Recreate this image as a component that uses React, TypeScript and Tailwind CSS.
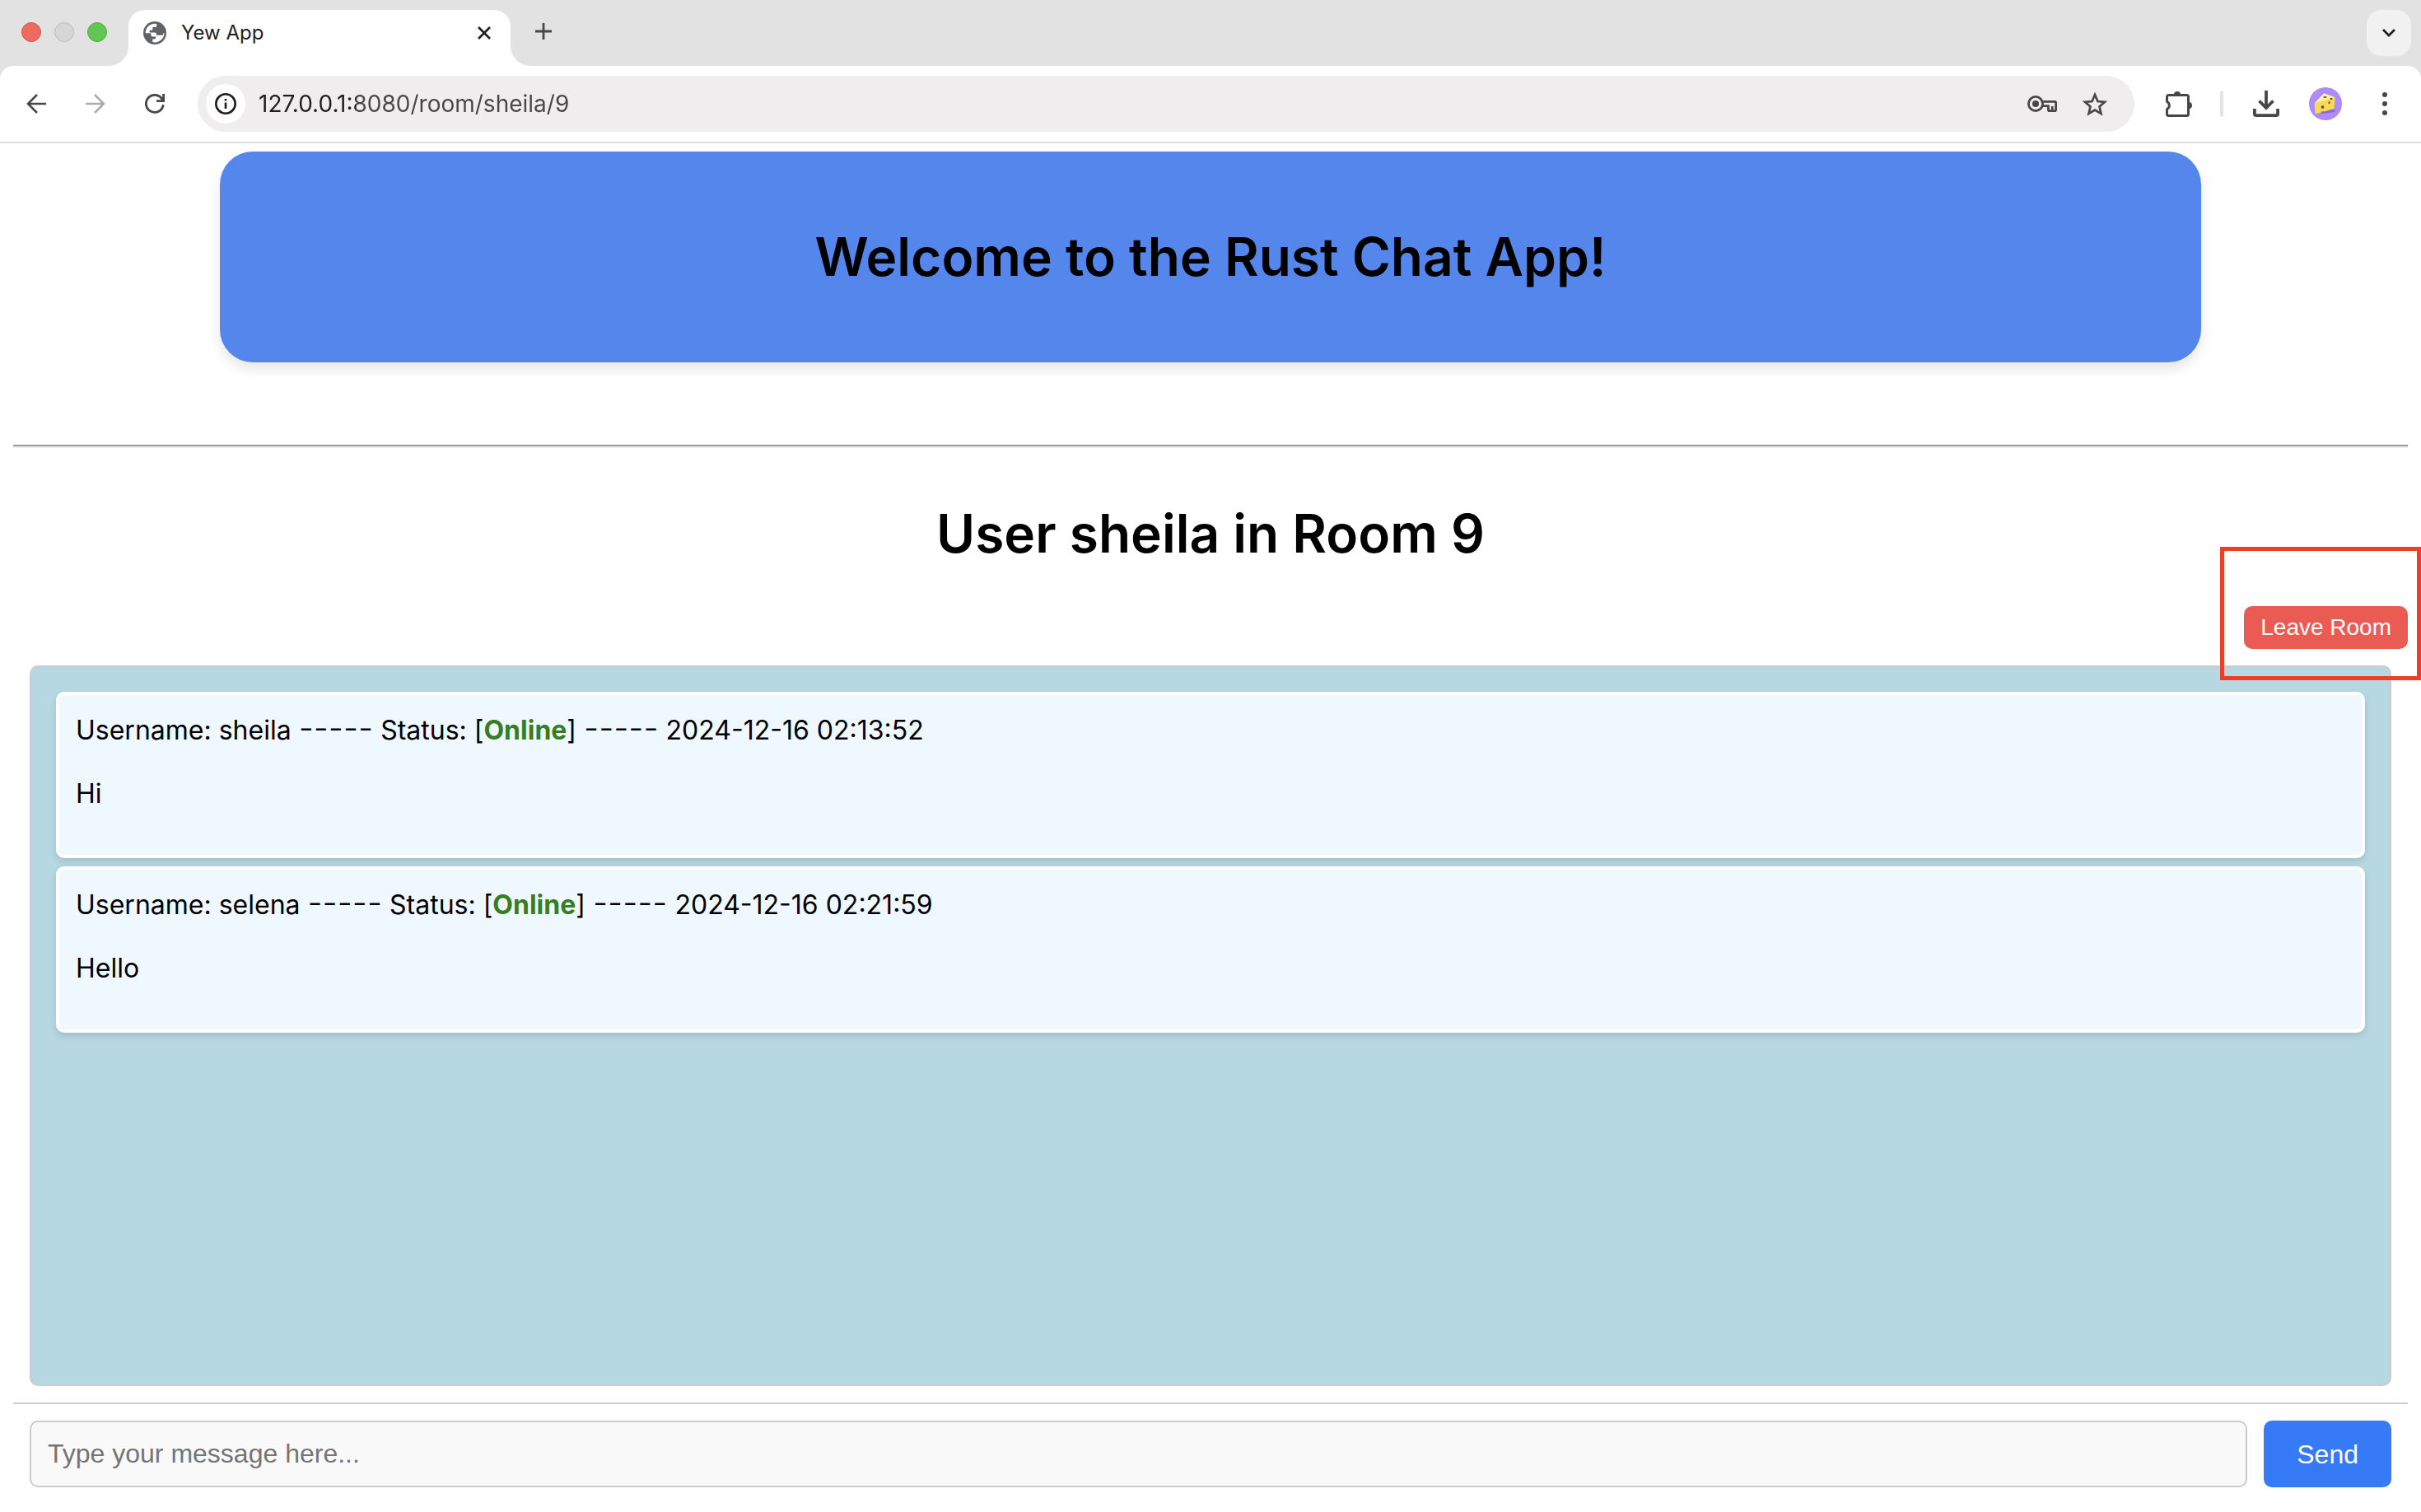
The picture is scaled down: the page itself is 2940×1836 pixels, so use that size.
import { useState } from "react";
import type { ReactNode } from "react";

type Message = { id: number; username: string; online: boolean; sentAt: string; text: string };

const messages: Message[] = [
  { id: 1, username: "sheila", online: true, sentAt: "2024-12-16 02:13:52", text: "Hi" },
  { id: 2, username: "selena", online: true, sentAt: "2024-12-16 02:21:59", text: "Hello" },
];

function IconButton({ label, className = "", children }: { label: string; className?: string; children: ReactNode }) {
  return (
    <button
      type="button"
      aria-label={label}
      className={`flex size-10 shrink-0 items-center justify-center rounded-full text-[#474747] ${className}`}
    >
      {children}
    </button>
  );
}

function Globe() {
  return (
    <svg viewBox="0 0 28 28" className="size-7 shrink-0" aria-hidden="true">
      <circle cx="14" cy="14" r="14" fill="#5f6368" />
      <path
        fill="#fff"
        d="M16.2 2.9v2.6c0 .9-.6 1.5-1.5 1.5h-3.3v2.4c0 .8-.6 1.4-1.4 1.4H7.600v2.6H14c1.100 0 1.900.8 1.900 1.900v1.500h6.200c.7 0 1.300.3 1.700-.3 .5-.8.6-1.600.8-2.400h.9A11.300 11.300 0 0 1 11.200 25v-3.500h2.300c1 0 1.700-.7 1.700-1.700v-1.400h-3.900c-1.100 0-1.900-.8-1.900-1.900v-2.300H2.700A11.300 11.300 0 0 1 16.200 2.900z"
      />
    </svg>
  );
}

function Avatar() {
  return (
    <svg viewBox="0 0 40 40" className="size-10" aria-hidden="true">
      <circle cx="20" cy="20" r="20" fill="#ad8bf8" />
      <path d="M12 31l9-3 11-1-1 3-14 2z" fill="#8a68d8" />
      <path d="M6.500 19.500L18 7.200l13.500 4.800-.3 1z" fill="#fdf1a4" />
      <path d="M6.500 19.500l25-7.500-.8 13.500-12.700 4.300c-1.300-2-3-1.500-3.500 1L7.500 32z" fill="#f7da55" />
      <ellipse cx="19.500" cy="12" rx="2.200" ry="1" fill="#7a4a48" />
      <ellipse cx="27" cy="14" rx="1.500" ry="1.200" fill="#7a4a48" />
      <ellipse cx="24.500" cy="18.700" rx="1.200" ry="1.400" fill="#7a4a48" />
      <ellipse cx="16.500" cy="24" rx="1.800" ry="2" fill="#7a4a48" />
    </svg>
  );
}

function TabStrip() {
  return (
    <div className="flex h-20 items-end pr-3 pl-[26px]">
      <div className="mr-0.5 flex h-20 items-center gap-4 pb-0.5">
        <button type="button" aria-label="Close window" className="size-6 rounded-full border border-[#d8574b] bg-[#ed6a5e]" />
        <button type="button" aria-label="Minimize window" className="size-6 rounded-full border border-[#bcbcbc] bg-[#d5d5d5]" />
        <button type="button" aria-label="Zoom window" className="size-6 rounded-full border border-[#52a93f] bg-[#61c654]" />
      </div>
      <svg viewBox="0 0 24 24" className="size-6 shrink-0" aria-hidden="true">
        <path d="M24 0v24H0A24 24 0 0 0 24 0z" fill="#fff" />
      </svg>
      <div className="flex h-[68px] w-[464px] items-center rounded-t-[20px] bg-white pr-3 pb-3 pl-[18px]">
        <Globe />
        <span className="ml-[18px] flex-1 text-[24px] leading-8 text-[#1f1f1f]">Yew App</span>
        <IconButton label="Close tab">
          <svg viewBox="0 0 16 16" className="size-4" fill="none" stroke="#1f1f1f" strokeWidth="2.600" aria-hidden="true">
            <path d="M1 1l14 14M15 1L1 15" />
          </svg>
        </IconButton>
      </div>
      <svg viewBox="0 0 24 24" className="size-6 shrink-0" aria-hidden="true">
        <path d="M0 0v24h24A24 24 0 0 1 0 0z" fill="#fff" />
      </svg>
      <IconButton label="New tab" className="mr-auto mb-[22px] -ml-1">
        <svg viewBox="0 0 20 20" className="size-5" fill="none" stroke="currentColor" strokeWidth="2.800" aria-hidden="true">
          <path d="M10 0v20M0 10h20" />
        </svg>
      </IconButton>
      <button
        type="button"
        aria-label="Search tabs"
        className="mb-3 flex h-14 w-[54px] items-center justify-center rounded-[18px] bg-[#f1f1f1]"
      >
        <svg viewBox="0 0 16 10" className="h-2.5 w-4" fill="none" stroke="#1f1f1f" strokeWidth="2.800" aria-hidden="true">
          <path d="M1 1l7 7 7-7" />
        </svg>
      </button>
    </div>
  );
}

function Toolbar() {
  const [url, setUrl] = useState("127.0.0.1:8080/room/sheila/9");
  return (
    <div className="flex h-[94px] items-center rounded-t-[16px] border-b-2 border-[#e2e2e2] bg-white px-6">
      <div className="mr-8 flex gap-8">
        <IconButton label="Back">
          <svg viewBox="0 0 24 24" className="size-6" fill="none" stroke="currentColor" strokeWidth="2.600" aria-hidden="true">
            <path d="M24 12H2M13 1L2 12l11 11" />
          </svg>
        </IconButton>
        <IconButton label="Forward" className="text-[#ababab]">
          <svg viewBox="0 0 24 24" className="size-6" fill="none" stroke="#ababab" strokeWidth="2.600" aria-hidden="true">
            <path d="M0 12h22M11 1l11 11-11 11" />
          </svg>
        </IconButton>
        <IconButton label="Reload">
          <svg viewBox="0 0 24 24" className="size-6" fill="none" stroke="currentColor" strokeWidth="2.800" aria-hidden="true">
            <path d="M22.300 13.200A10.500 10.500 0 1 1 20.200 5.400L22 8M22.600 0v8.600H14" />
          </svg>
        </IconButton>
      </div>

      <div className="flex h-[68px] flex-1 items-center rounded-full bg-[#efedee] pr-7 pl-2.5">
        <button type="button" aria-label="View site information" className="flex size-12 items-center justify-center rounded-full bg-white">
          <svg viewBox="0 0 26 26" className="size-[26px]" fill="none" stroke="#1f1f1f" strokeWidth="2.600" aria-hidden="true">
            <circle cx="13" cy="13" r="11.700" />
            <path d="M13 11.500V19M13 7v2.600" />
          </svg>
        </button>
        <input
          type="text"
          aria-label="Address and search bar"
          value={url}
          onChange={(e) => setUrl(e.target.value)}
          className="ml-4 h-12 flex-1 bg-[linear-gradient(90deg,#1f1f1f_118px,#474747_118px)] bg-clip-text text-[28px] text-transparent caret-black outline-none"
        />
        <div className="flex gap-6">
          <IconButton label="Manage passwords">
            <svg viewBox="0 0 36 20" className="h-5 w-9" fill="none" stroke="currentColor" strokeWidth="2.800" aria-hidden="true">
              <circle cx="10" cy="10" r="8.600" />
              <circle cx="10" cy="10" r="4" fill="currentColor" stroke="none" />
              <path d="M18 7.400h15.200a1.400 1.400 0 0 1 1.400 1.400v8.400a1.400 1.400 0 0 1-1.400 1.400h-6.400a1.400 1.400 0 0 1-1.400-1.400v-4.600H18M30.200 18.500V13" />
            </svg>
          </IconButton>
          <IconButton label="Bookmark this tab">
            <svg viewBox="0 0 32 30" className="h-[30px] w-8" fill="none" stroke="currentColor" strokeWidth="2.700" aria-hidden="true">
              <path d="M16 4l3.400 8 8.600.8-6.500 5.700 2 8.500-7.500-4.500L8.500 27l2-8.500L4 12.800l8.600-.8z" />
            </svg>
          </IconButton>
        </div>
      </div>

      <IconButton label="Extensions" className="ml-[34px]">
        <svg viewBox="0 0 32 32" className="size-8" aria-hidden="true">
          <path
            fill="none"
            stroke="currentColor"
            strokeWidth="3"
            strokeLinejoin="round"
            d="M1.500 7.500a2 2 0 0 1 2-2h22a2 2 0 0 1 2 2v21a2 2 0 0 1-2 2h-22a2 2 0 0 1-2-2v-6a5 5 0 0 0 0-9z"
          />
          <path fill="currentColor" d="M10 5a4 4 0 0 1 8 0zM28 14a4 4 0 0 1 0 8z" />
        </svg>
      </IconButton>
      <span className="ml-[30px] h-8 w-1 rounded-full bg-[#e3e3e3]" />
      <IconButton label="Downloads" className="ml-8">
        <svg viewBox="0 0 32 32" className="size-8" fill="none" stroke="currentColor" strokeWidth="3.800" aria-hidden="true">
          <path d="M16 0v21M7.500 12.500L16 21l8.500-8.500M1.900 22v6.200a1.900 1.900 0 0 0 1.900 1.900h24.400a1.900 1.900 0 0 0 1.900-1.900V22" />
        </svg>
      </IconButton>
      <IconButton label="Profile" className="ml-8">
        <Avatar />
      </IconButton>
      <IconButton label="Browser menu" className="ml-8">
        <svg viewBox="0 0 6 28" className="h-7 w-1.5" fill="currentColor" aria-hidden="true">
          <circle cx="3" cy="3" r="3" />
          <circle cx="3" cy="14" r="3" />
          <circle cx="3" cy="25" r="3" />
        </svg>
      </IconButton>
    </div>
  );
}

function Dashes() {
  return <span className="text-[40px] leading-none font-light">-----</span>;
}

function MessageCard({ message }: { message: Message }) {
  return (
    <li className="rounded-[10px] border-4 border-white bg-[#f0f8ff] px-5 pt-5 pb-[52px] text-[32px] leading-[45px] shadow-[0_4px_8px_rgba(0,0,0,0.12)]">
      <p className="h-[45px] whitespace-nowrap">
        Username: {message.username} <Dashes /> Status: [
        <strong className="font-bold text-[#377e22]">{message.online ? "Online" : "Offline"}</strong>] <Dashes />{" "}
        {message.sentAt}
      </p>
      <p className="mt-8">{message.text}</p>
    </li>
  );
}

export default function App() {
  const [draft, setDraft] = useState("");
  return (
    <div className="flex min-h-screen flex-col bg-white font-[Inter,'Liberation_Sans',sans-serif] text-black">
      <header className="bg-[#e2e2e2]">
        <TabStrip />
        <Toolbar />
      </header>

      <main className="flex flex-1 flex-col px-4 pt-2.5 pb-[30px]">
        <div className="mx-auto w-[calc(80%+80px)] rounded-[40px] bg-[#5486ec] py-[88px] shadow-[0_8px_16px_rgba(0,0,0,0.1)]">
          <h1 className="text-center text-[64px] leading-[80px] font-semibold">Welcome to the Rust Chat App!</h1>
        </div>

        <hr className="mt-[100px] border-t-2 border-b-2 border-t-[#9a9a9a] border-b-[#eeeeee]" />

        <h1 className="mt-16 text-center text-[64px] leading-[80px] font-semibold">User sheila in Room 9</h1>

        <div className="relative mt-12 flex justify-end">
          <button
            type="button"
            className="h-[52px] rounded-[10px] bg-[#ea5b54] px-5 font-['Liberation_Sans',Arial,sans-serif] text-[28px] leading-8 text-white"
          >
            Leave Room
          </button>
          <div className="pointer-events-none absolute -top-[72px] -right-4 z-10 h-[162px] w-[244px] border-5 border-[#ec4026]" />
        </div>

        <ul className="mx-5 mt-5 flex flex-1 flex-col gap-2.5 rounded-[10px] border-2 border-[#cccccc] bg-[#b6d8e3] p-[30px]">
          {messages.map((m) => (
            <MessageCard key={m.id} message={m} />
          ))}
        </ul>

        <form
          onSubmit={(e) => e.preventDefault()}
          className="mt-5 flex gap-5 border-t-2 border-[#cccccc] px-5 pt-5 font-['Liberation_Sans',Arial,sans-serif] text-[32px]"
        >
          <input
            type="text"
            aria-label="Message"
            placeholder="Type your message here..."
            value={draft}
            onChange={(e) => setDraft(e.target.value)}
            className="h-[81px] min-w-0 flex-1 rounded-[10px] border-2 border-[#cccccc] bg-[#f9f9f9] px-5 outline-none placeholder:text-[#757575]"
          />
          <button type="submit" className="h-[81px] rounded-[10px] bg-[#367af6] px-10 text-white">
            Send
          </button>
        </form>
      </main>
    </div>
  );
}
